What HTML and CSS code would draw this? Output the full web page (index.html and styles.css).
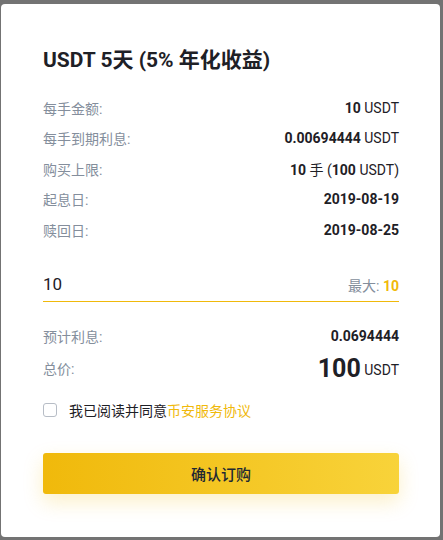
FILE: index.html
```
<!DOCTYPE html>
<html lang="zh-CN">
<head>
<meta charset="utf-8">
<title>USDT 5天</title>
<link rel="stylesheet" href="styles.css">
</head>
<body>
<div class="modal">
  <h2 class="title">USDT 5天 (5% 年化收益)</h2>
  <div class="rows">
    <div class="row"><span class="label">每手金额:</span><span class="value"><b>10</b> USDT</span></div>
    <div class="row"><span class="label">每手到期利息:</span><span class="value"><b>0.00694444</b> USDT</span></div>
    <div class="row"><span class="label">购买上限:</span><span class="value"><b>10</b> 手 (<b>100</b> USDT)</span></div>
    <div class="row"><span class="label">起息日:</span><span class="value"><b>2019-08-19</b></span></div>
    <div class="row"><span class="label">赎回日:</span><span class="value"><b>2019-08-25</b></span></div>
  </div>
  <div class="input-row">
    <span class="input-val">10</span>
    <span class="max">最大: <b>10</b></span>
  </div>
  <div class="rows summary">
    <div class="row"><span class="label">预计利息:</span><span class="value"><b>0.0694444</b></span></div>
    <div class="row total"><span class="label">总价:</span><span class="value"><b class="big">100</b> USDT</span></div>
  </div>
  <label class="agree"><span class="box"></span><span>我已阅读并同意<span class="link">币安服务协议</span></span></label>
  <button class="confirm">确认订购</button>
</div>
</body>
</html>
```
FILE: styles.css
```
html, body {
  margin: 0;
  padding: 0;
}
body {
  background: #737373;
  width: 443px;
  height: 540px;
  overflow: hidden;
  font-family: "Roboto", "Noto Sans CJK SC", sans-serif;
  color: #1e2026;
}
.modal {
  box-sizing: border-box;
  margin: 4px 0 0 1px;
  width: 439px;
  height: 533px;
  background: #fff;
  border-radius: 4px;
  padding: 42px 41px 0 42px;
}
.title {
  margin: 0;
  font-size: 21px;
  line-height: 28px;
  font-weight: 700;
  color: #1e2026;
}
.rows {
  margin-top: 18px;
}
.row {
  display: flex;
  justify-content: space-between;
  align-items: center;
  height: 31px;
  font-size: 14px;
}
.row:nth-child(even) {
  height: 30px;
}
.label {
  color: #848e9c;
}
.value {
  color: #1e2026;
}
.value b {
  font-weight: 700;
}
.input-row {
  margin-top: 21px;
  height: 35px;
  display: flex;
  justify-content: space-between;
  align-items: center;
  border-bottom: 1px solid #f0b90b;
}
.input-val {
  font-size: 17px;
  color: #1e2026;
}
.max {
  font-size: 14px;
  color: #848e9c;
  padding-top: 3px;
}
.max b {
  color: #f0b90b;
  font-weight: 700;
}
.summary {
  margin-top: 18px;
}
.summary .row {
  height: 31px;
}
.summary .row.total {
  height: 34px;
}
.big {
  font-size: 25px;
  vertical-align: -2px;
}
.agree {
  margin-top: 14px;
  height: 22px;
  display: flex;
  align-items: center;
  gap: 12px;
  font-size: 14px;
  color: #1e2026;
}
.box {
  box-sizing: border-box;
  width: 14px;
  height: 14px;
  border: 1px solid #b7bdc6;
  border-radius: 3px;
  background: #fff;
}
.link {
  color: #f0b90b;
}
.confirm {
  display: block;
  margin-top: 32px;
  width: 356px;
  height: 41px;
  border: none;
  border-radius: 3px;
  background: linear-gradient(90deg, #f0b90b 0%, #f8d33a 100%);
  box-shadow: 0 8px 20px rgba(240, 185, 11, 0.22);
  font-family: "Roboto", "Noto Sans CJK SC", sans-serif;
  font-size: 15px;
  font-weight: 500;
  color: #212833;
  padding: 0;
}
```
